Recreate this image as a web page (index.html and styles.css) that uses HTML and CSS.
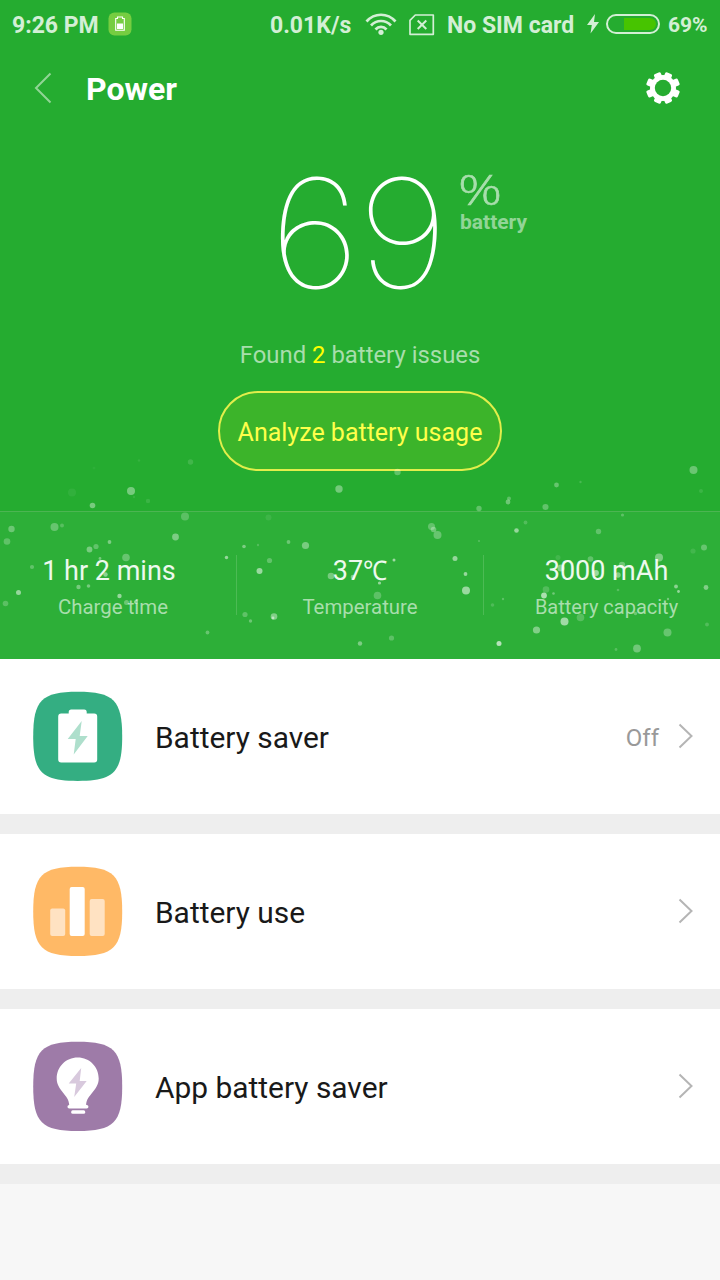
FILE: index.html
```html
<!DOCTYPE html>
<html lang="en">
<head>
<meta charset="utf-8">
<title>Power</title>
<link rel="stylesheet" href="styles.css">
</head>
<body>
<main class="screen">
  <section class="hero">
    <svg class="particles" viewBox="0 0 720 659" aria-hidden="true"><g id="dots"></g></svg>
    <header class="status">
      <span class="clock">9:26 PM</span>
      <svg class="app-badge" width="24" height="24" viewBox="0 0 24 24"><rect x=".5" y=".5" width="23" height="23" rx="6" fill="#76cd41"/><path d="M9.500 5h5v1.500h1.800v11.800H7.700V6.500h1.800z" fill="none" stroke="#fff" stroke-width="1.100"/><path d="M9 11.500h6v5.500H9z" fill="#fff"/></svg>
      <span class="speed">0.01K/s</span>
      <svg class="wifi" width="32" height="24" viewBox="0 0 32 24" fill="none" stroke="#d3efd5" stroke-width="2.7"><path d="M1.500 9.500C9.500 .5 22.500 .5 30.500 9.500"/><path d="M6 13.500c5.500-6 14.500-6 20 0"/><path d="M10.500 17.500c3-3.500 8-3.500 11 0"/><circle cx="16" cy="20.300" r="2.600" fill="#d3efd5" stroke="none"/></svg>
      <svg class="sim" width="26" height="22" viewBox="0 0 26 22" fill="none" stroke="#d3efd5"><path d="M6.300 1H24.300V20.300H1V6.300z" stroke-width="1.700" stroke-linejoin="round"/><path d="M8.700 6.500l8.600 8.500m0-8.500l-8.600 8.500" stroke-width="2"/></svg>
      <span class="carrier">No SIM card</span>
      <svg class="charge" width="12" height="20" viewBox="0 0 12 20"><path d="M8 0L0 11h4.800L3.500 19.500 12 8H7z" fill="#d3efd5"/></svg>
      <span class="meter"><i class="meter-fill"></i></span>
      <span class="percent">69%</span>
    </header>

    <nav class="appbar">
      <svg class="back" width="18" height="32" viewBox="0 0 18 32"><path d="M16.500 1.500L2 16l14.500 14.500" fill="none" stroke="#91d595" stroke-width="2"/></svg>
      <h1 class="title">Power</h1>
      <svg class="gear" width="34" height="32" viewBox="-17 -16 34 32"><g fill="#fff"><rect x="-3.700" y="-16" width="7.400" height="32" rx="1.800" transform="rotate(22.500)"/><rect x="-3.700" y="-16" width="7.400" height="32" rx="1.800" transform="rotate(-22.500)"/><rect x="-3.700" y="-17" width="7.400" height="34" rx="1.800" transform="rotate(67.500)"/><rect x="-3.700" y="-17" width="7.400" height="34" rx="1.800" transform="rotate(-67.500)"/></g><circle r="13" fill="#fff"/><circle r="8.200" fill="#25ac30"/></svg>
    </nav>

    <div class="level">
      <span class="value">69</span>
      <span class="unit"><span class="sign">%</span><span class="unit-label">battery</span></span>
    </div>
    <p class="issues">Found <b class="count">2</b> battery issues</p>
    <button class="analyze">Analyze battery usage</button>

    <div class="stats">
      <div class="stat"><span class="stat-value">1 hr 2 mins</span><span class="stat-label">Charge time</span></div>
      <div class="stat divided"><span class="stat-value">37<span class="degrees">℃</span></span><span class="stat-label">Temperature</span></div>
      <div class="stat"><span class="stat-value">3000 mAh</span><span class="stat-label capacity">Battery capacity</span></div>
    </div>
  </section>

  <section class="list">
    <a class="row">
      <svg class="icon" width="90" height="90" viewBox="-.7 -.4 90 90"><path class="teal" d="M45 .3C81 .3 89.500 9 89.500 45S81 89.500 45 89.500 .5 81 .5 45 9 .3 45 .3z"/><path d="M38.500 18h13q2.500 0 2.500 2.500V22h7.500q3 0 3 3v43q0 3-3 3h-33q-3 0-3-3V25q0-3 3-3H36v-1.500q0-2.500 2.500-2.500z" fill="#fff"/><path d="M49 29.500L35 47.500h8L41 63l14-18.500h-8z" fill="#aedfcc"/></svg>
      <span class="name">Battery saver</span><span class="state">Off</span>
      <svg class="chevron" width="16" height="26" viewBox="0 0 16 26"><path d="M1.500 1.500L13.500 13 1.500 24.500"/></svg>
    </a>
    <a class="row">
      <svg class="icon" width="90" height="90" viewBox="-.7 -.4 90 90"><path class="orange" d="M45 .3C81 .3 89.500 9 89.500 45S81 89.500 45 89.500 .5 81 .5 45 9 .3 45 .3z"/><rect x="17.500" y="42" width="15" height="27.500" rx="2" fill="#ffe2c2"/><rect x="37" y="20.500" width="15" height="49" rx="2" fill="#fff"/><rect x="57" y="32.500" width="15" height="37" rx="2" fill="#ffe2c2"/></svg>
      <span class="name">Battery use</span>
      <svg class="chevron" width="16" height="26" viewBox="0 0 16 26"><path d="M1.500 1.500L13.500 13 1.500 24.500"/></svg>
    </a>
    <a class="row">
      <svg class="icon" width="90" height="90" viewBox="-.7 -.4 90 90"><path class="purple" d="M45 .3C81 .3 89.500 9 89.500 45S81 89.500 45 89.500 .5 81 .5 45 9 .3 45 .3z"/><path d="M45 16c12 0 21 9.500 21 21 0 12-12.500 16.500-12.500 26.500H54a1.700 1.700 0 0 1 0 3.500H36.500a1.700 1.700 0 0 1 0-3.500C36.500 53.500 24 49 24 37c0-11.500 9-21 21-21z" fill="#fff"/><rect x="38.500" y="68.800" width="14" height="3.500" rx="1.500" fill="#fff"/><path d="M48.500 26.500L36 42h7.500L41.500 55.500 54 39.500h-7z" fill="#d8c9dd"/></svg>
      <span class="name">App battery saver</span>
      <svg class="chevron" width="16" height="26" viewBox="0 0 16 26"><path d="M1.500 1.500L13.500 13 1.500 24.500"/></svg>
    </a>
  </section>
</main>
<script src="particles.js"></script>
</body>
</html>
```

FILE: styles.css
```css
* { box-sizing: border-box; }
body { margin: 0; background: #f7f7f7; font-family: Roboto, "Liberation Sans", sans-serif; }
svg { display: block; flex: none; }
.screen { width: 720px; height: 1280px; overflow: hidden; }
.hero { position: relative; display: flex; flex-direction: column; height: 659px; background: #25ac30; color: #fff; }
.particles { position: absolute; inset: 0; width: 720px; height: 659px; z-index: 1; pointer-events: none; }

.status { display: flex; align-items: center; height: 50px; padding-left: 12px; font-size: 23px; line-height: 28px; font-weight: 700; color: #d3efd5; white-space: nowrap; }
.clock, .speed, .carrier { padding-top: 2px; }
.clock { width: 96px; }
.speed { width: 95px; margin-left: 138px; }
.wifi { margin-top: -2px; }
.app-badge { margin-top: -2px; }
.sim { margin-left: 12px; }
.carrier { width: 140px; margin-left: 12px; }
.charge { margin-top: -2px; }
.meter { display: flex; justify-content: flex-end; width: 54px; height: 20px; margin: -2px 8px 0 7px; padding: 2px; border: 2px solid #d3efd5; border-radius: 10px; }
.meter-fill { width: 32px; height: 12px; border-radius: 0 7px 7px 0; background: #47c400; }
.percent { font-size: 21px; }

.appbar { display: flex; align-items: center; height: 76px; padding: 0 40px 0 34px; }
.title { flex: 1; margin: 2px 0 0 34px; font-size: 32px; line-height: 40px; font-weight: 700; }

.level { display: flex; height: 204px; padding-left: 270px; }
.value { width: 190px; font: 100 151px/204px Inter, sans-serif; margin-top: 5px; letter-spacing: -3px; transform: scaleX(1.07); transform-origin: 10px 50%; }
.unit { display: flex; flex-direction: column; padding-top: 41px; }
.sign { width: 32px; height: 44px; font: 300 43px/44px "Open Sans", sans-serif; color: #a8deac; -webkit-text-stroke: .6px #a8deac; transform: scaleX(1.27); transform-origin: 0 50%; margin-left: -2px; }
.unit-label { font-size: 21px; line-height: 24px; font-weight: 700; color: #92d597; margin-top: -1px; }

.issues { margin: 10px 0 0; text-align: center; font-size: 23.900px; line-height: 30px; color: #a8deac; }
.count { font-weight: 400; color: #ff0; }
.analyze { align-self: center; width: 284px; height: 80px; margin-top: 21px; padding: 4px 0 0; border: 2px solid #e2ee4b; border-radius: 40px; background: #3cb42a; color: #ffff4b; font: 400 25px/30px Roboto, sans-serif; white-space: nowrap; }

.stats { display: grid; grid-template-columns: 236px 248px 236px; height: 148px; margin-top: auto; padding-top: 43px; border-top: 1px solid #4cb552; background: #2daf38; }
.stat { display: flex; flex-direction: column; align-items: center; height: 60px; white-space: nowrap; }
.stat:last-child { padding-left: 9px; }
.stat:first-child { padding-right: 10px; }
.stat:first-child .stat-value { padding-right: 8px; }
.divided { border: solid #4cbb54; border-width: 0 1px; }
.stat-value { font-size: 27px; line-height: 32px; color: #edf9ee; }
.degrees { display: inline-block; width: 24px; transform: scaleX(.9); transform-origin: 0 50%; }
.stat-label { font-size: 20.4px; line-height: 24px; margin-top: 8px; color: #a8deac; }
.capacity { font-size: 20px; }

.list { display: flex; flex-direction: column; }
.row { display: flex; align-items: center; height: 175px; padding: 0 26px 0 32px; background: #fff; border-bottom: 20px solid #eee; color: #191919; }
.icon { margin-top: -1px; overflow: visible; }
.name { flex: 1; margin: 2px 0 0 33px; font-size: 29.900px; line-height: 36px; }
.state { margin: 2px 19px 0 0; font-size: 24px; color: #999; }
.chevron { margin-top: -2px; }
.chevron path { fill: none; stroke: #b5b5b5; stroke-width: 2; }
.teal { fill: #34ae82; }
.orange { fill: #ffb966; }
.purple { fill: #9e7ba8; }
```

FILE: particles.js
```js
// Each particle: x, y, radius, opacity.
const particles = [
  [131,491,4,.38],[92.500,505.500,2.800,.38],[190.500,462,2.700,.13],[72,492.500,4,.06],[148,501,2.200,.1],[139,460.500,1.200,.08],[94,468,1.500,.04],[134,497,1.200,.08],
  [185,516.500,4,.22],[54.500,527,4,.28],[62,525.500,2,.2],[11.500,529,3.200,.3],[7,541.500,3.300,.24],[175.500,537,3.400,.38],[109.500,542,1.900,.38],[96,546.500,2.600,.25],[89.500,549.500,2.900,.36],[126,557.500,3.800,.28],[100,558.500,1.400,.35],[226.500,557.500,1.700,.5],[32,567,2.100,.25],[105.500,574.500,2.200,.45],[78.500,587,2.200,.35],[88.500,586,1.800,.35],[18.500,592.500,2.500,.5],[119.500,596,2.200,.5],[5.500,603.500,2.800,.22],[126.500,602.500,2.500,.3],[136,602,2,.5],[207.500,632.500,1.900,.28],
  [339,489,3.700,.36],[397.500,472,3.200,.28],[479,508.500,2.700,.28],[268.500,517.500,3,.08],[431.500,526.500,3.500,.26],[433.500,529.500,2.800,.3],[437.500,535,4,.28],[305.500,545.500,3.600,.36],[288.500,542,1.900,.3],[244,546.500,1.800,.38],[258,545,1.200,.18],[269.500,560.500,2.600,.25],[259.500,571,3,.52],[331,576,3.300,.35],[353,577,2.300,.4],[394,560,1.500,.55],[379.500,583,1.600,.5],[377.500,595.500,3.800,.23],[455,558.500,2.500,.5],[465.500,574,1.900,.5],[466,590.500,4,.52],[245,614.500,2.600,.24],[250.500,621,1.700,.3],[274,616.500,3.300,.4],[273,618,1.400,.5],[360,643.500,2.200,.38],[391.500,638,2.600,.23],[479,541,1.100,.2],
  [693.500,470,4,.32],[556.500,485,2.400,.3],[580.500,482,1.200,.16],[701,491,2,.1],[509,498.500,2,.26],[508,502,2.400,.33],[545.500,507,3.100,.28],[622.500,515,1.600,.23],[525.500,522.500,1.900,.18],[516.500,530.500,2.300,.5],[598.500,531.500,2.700,.25],[704,547.500,3,.28],[693,551,2.600,.1],[558,557.500,2.500,.1],[590.500,559,2.800,.25],[561,568,3.600,.4],[659,557.500,4,.38],[622,565,3.200,.3],[618,575,2.700,.4],[596,573,2.900,.52],[546,589.500,3.300,.18],[544,595.500,2.900,.6],[553.500,593.500,1.300,.33],[618,590,1.300,.2],[676,586.500,1.900,.45],[678.500,591.500,1.400,.5],[706,587.500,2.400,.4],[503,599,1.200,.23],[492.500,605,1.800,.16],[668,599,1.200,.35],[580.500,617.500,3.800,.2],[564.500,621.500,4,.55],[536.500,630,3.600,.4],[667.500,632.500,4,.28],[707,624.500,1.900,.18],[499,643.500,2.500,.65],[637,648.500,3.900,.32],[616,649.500,1.400,.2],[635.500,613.500,1.700,.3]
];
const layer = document.getElementById("dots");
for (const [x, y, r, opacity] of particles) {
  const dot = document.createElementNS("http://www.w3.org/2000/svg", "circle");
  dot.setAttribute("cx", x);
  dot.setAttribute("cy", y);
  dot.setAttribute("r", r);
  dot.setAttribute("fill", "#fff");
  dot.setAttribute("fill-opacity", opacity);
  layer.append(dot);
}
```
